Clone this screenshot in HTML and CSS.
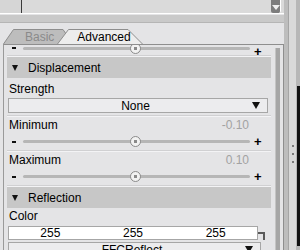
FILE: index.html
```html
<!DOCTYPE html>
<html lang="en">
<head>
  <meta charset="UTF-8" />
  <title>Surface Advanced</title>
  <link rel="stylesheet" href="styles.css">
</head>
<body>
  <div class="frame">
    <div class="main">
      <div class="topbox">
        <div class="topbox-left"></div>
        <div class="topbox-field"><span class="topbox-text">1.000</span></div>
        <div class="topbox-thumb">
          <svg width="8" height="6" viewBox="0 0 8 6"><path d="M0 0h8L4 5z" fill="#f0f0f0"/></svg>
        </div>
      </div>
      <div class="band"></div>

      <div class="tabs">
        <svg class="tab-shapes" width="284" height="16" viewBox="0 0 284 16">
          <path d="M0.5 16L10.5 1.5H60L70 16" fill="#bdbdbd" stroke="#8e8e8e"/>
          <path d="M54.5 16L65.5 1.5H125L139.5 16" fill="#ededed" stroke="#8e8e8e"/>
        </svg>
        <span class="tab tab-off">Basic</span>
        <span class="tab tab-on">Advanced</span>
      </div>

      <div class="panel">
        <div class="content">
          <div class="slider slider-top">
            <span class="minus"></span>
            <div class="track"><span class="knob"></span></div>
            <span class="plus">+</span>
          </div>
          <div class="sep"></div>

          <div class="section-head"><span class="tri"></span>Displacement</div>
          <div class="label label-first">Strength</div>
          <div class="select"><span class="select-text">None</span><span class="arrow"></span></div>
          <div class="sep sep-gap"></div>

          <div class="label label-row"><span>Minimum</span><span class="value">-0.10</span></div>
          <div class="slider">
            <span class="minus"></span>
            <div class="track"><span class="knob"></span></div>
            <span class="plus">+</span>
          </div>
          <div class="sep"></div>

          <div class="label label-row"><span>Maximum</span><span class="value">0.10</span></div>
          <div class="slider">
            <span class="minus"></span>
            <div class="track"><span class="knob"></span></div>
            <span class="plus">+</span>
          </div>
          <div class="sep"></div>

          <div class="section-head"><span class="tri"></span>Reflection</div>
          <div class="label label-tight">Color</div>
          <div class="color-row">
            <div class="color-box">
              <span>255</span><span>255</span><span>255</span>
            </div>
            <div class="bracket"></div>
          </div>
          <div class="select select-map"><span class="select-text">FFCReflect</span><span class="arrow"></span></div>
        </div>
        <div class="scrollbar"><div class="scroll-line"></div></div>
      </div>
    </div>

    <div class="side">
      <div class="side-a"></div>
      <div class="side-b">
        <div class="grip"><i></i><i></i><i></i></div>
      </div>
      <div class="side-c"><div class="side-dark"></div></div>
    </div>
  </div>
</body>
</html>
```

FILE: styles.css
```css
body {
  margin: 0;
  font-family: "Liberation Sans", Arial, sans-serif;
  font-size: 12px;
  color: #000;
  background-color: #e4e4e6;
  overflow: hidden;
}
.frame {
  display: flex;
  width: 300px;
  height: 250px;
  overflow: hidden;
}
.main {
  width: 284px;
  display: flex;
  flex-direction: column;
}

/* clipped field from the pane above */
.topbox {
  display: flex;
  height: 13px;
  border-bottom: 1px solid #ffffff;
  background-color: #dadada;
}
.topbox-left {
  width: 21px;
  border-right: 1px solid #3a3a3a;
  background-color: #d6d6d6;
}
.topbox-field {
  flex: 1;
  overflow: hidden;
  padding-left: 20px;
}
.topbox-text {
  display: block;
  margin-top: -11px;
  line-height: 14px;
}
.topbox-thumb {
  width: 10px;
  margin-right: 3px;
  background-color: #7d7d7d;
  border-radius: 0 0 2px 2px;
  display: flex;
  align-items: flex-end;
  justify-content: center;
  padding-bottom: 2px;
  box-sizing: border-box;
  border-right: 1px solid #ffffff;
}
.band {
  height: 7px;
  margin-top: 1px;
  background-color: #c9c9c9;
  border-bottom: 1px solid #b5b5b5;
}

/* tabs */
.tabs {
  position: relative;
  height: 16px;
  margin-top: 5px;
  margin-left: 3px;
  display: flex;
  align-items: center;
}
.tab-shapes {
  position: absolute;
  left: 0;
  top: 0;
}
.tab {
  position: relative;
  font-size: 12px;
  line-height: 14px;
  padding-top: 2px;
}
.tab-off {
  color: #8a8a8a;
  margin-left: 22px;
}
.tab-on {
  margin-left: 23px;
}

/* panel */
.panel {
  flex: 1;
  display: flex;
  margin-left: 3px;
  border-top: 1px solid #8e8e8e;
  border-left: 1px solid #9a9a9a;
  border-right: 1px solid #8e8e8e;
  overflow: hidden;
}
.content {
  width: 264px;
  padding-left: 3px;
  display: flex;
  flex-direction: column;
}
.scrollbar {
  flex: 1;
  display: flex;
  justify-content: center;
  padding-top: 3px;
}
.scroll-line {
  width: 4px;
  background-color: #a6a6a6;
  border-left: 1px solid #c4c4c4;
}

.slider {
  height: 17px;
  display: flex;
  align-items: center;
  flex-shrink: 0;
}
.slider-top {
  height: 8px;
  align-items: flex-start;
  padding-top: 2px;
}
.minus {
  width: 4px;
  height: 2px;
  margin-left: 5px;
  background-color: #111;
}
.track {
  position: relative;
  width: 227px;
  height: 3px;
  margin-left: 7px;
  border-radius: 2px;
  background-color: #b6b6b6;
}
.knob {
  position: absolute;
  left: 107px;
  top: -4px;
  width: 9px;
  height: 9px;
  border-radius: 50%;
  border: 1px solid #8c8c8c;
  background: radial-gradient(circle, #8a8a8a 0 1.5px, #f2f2f2 2px);
}
.plus {
  font-weight: bold;
  font-size: 13px;
  line-height: 10px;
  margin-left: 4px;
}
.sep {
  height: 0;
  border-top: 1px solid #d0d0d2;
  border-bottom: 1px solid #f3f3f5;
  flex-shrink: 0;
}
.sep-gap {
  margin-top: 2px;
}

.section-head {
  height: 21px;
  display: flex;
  align-items: center;
  background-color: #c7c7c7;
  flex-shrink: 0;
}
.tri {
  width: 0;
  height: 0;
  margin-left: 5px;
  margin-right: 10px;
  border-left: 3.5px solid transparent;
  border-right: 3.5px solid transparent;
  border-top: 6px solid #111;
}
.label {
  height: 16px;
  line-height: 16px;
  padding-left: 2px;
  margin-top: 1px;
  flex-shrink: 0;
}
.label-first {
  margin-top: 3px;
}
.label-tight {
  margin-top: 0;
  height: 15px;
}
.label-row {
  display: flex;
  justify-content: space-between;
  padding-right: 22px;
  margin-top: 0;
}
.value {
  color: #a2a2a2;
}
.select {
  height: 13px;
  margin: 1px 3px 0 1px;
  border: 1px solid #a6a6a6;
  background-color: #ececee;
  display: flex;
  align-items: center;
  flex-shrink: 0;
}
.select-text {
  flex: 1;
  text-align: center;
  padding-left: 10px;
}
.arrow {
  width: 0;
  height: 0;
  margin-right: 7px;
  border-left: 4px solid transparent;
  border-right: 4px solid transparent;
  border-top: 7px solid #111;
}
.color-row {
  display: flex;
  margin-top: 3px;
  flex-shrink: 0;
}
.color-box {
  width: 248px;
  height: 12px;
  margin-left: 1px;
  border: 1px solid #a6a6a6;
  background-color: #ffffff;
  display: grid;
  grid-template-columns: 1fr 1fr 1fr;
  text-align: center;
  line-height: 13px;
}
.bracket {
  width: 5px;
  margin-top: 6px;
  border-top: 2px solid #5a5a5a;
  border-right: 2px solid #5a5a5a;
}
.select-map {
  margin-right: 10px;
  margin-top: 2px;
}

/* right side strip */
.side {
  flex: 1;
  display: flex;
}
.side-a {
  width: 4px;
  background-color: #bdbdbd;
  border-right: 1px solid #a5a5a5;
}
.side-b {
  width: 7px;
  background-color: #d9d9d9;
  display: flex;
  justify-content: center;
  padding-top: 145px;
}
.grip {
  display: flex;
  flex-direction: column;
  gap: 6px;
}
.grip i {
  display: block;
  width: 2px;
  height: 2px;
  background-color: #7a7a7a;
}
.side-c {
  flex: 1;
  background-color: #b7b7b7;
  padding-top: 86px;
  display: flex;
  justify-content: flex-end;
}
.side-dark {
  width: 3px;
  height: 160px;
  background-color: #111;
}
```
